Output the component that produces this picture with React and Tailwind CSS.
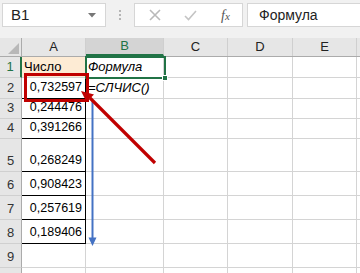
import React from 'react'

const COLS = [
  { key: 'A', w: 'w-[64px]' },
  { key: 'B', w: 'w-[78px]' },
  { key: 'C', w: 'w-[64px]' },
  { key: 'D', w: 'w-[65px]' },
  { key: 'E', w: 'w-[64px]' },
  { key: 'F', w: 'w-[20px]', hidden: true },
]

const ROWS = [
  { n: 1, h: 'h-[21px]', a: 'Число', b: 'Формула' },
  { n: 2, h: 'h-[21px]', a: '0,732597', b: '=СЛЧИС()' },
  { n: 3, h: 'h-[20px]', a: '0,244476' },
  { n: 4, h: 'h-[20px]', a: '0,391266' },
  { n: 5, h: 'h-[33px]', a: '0,268249' },
  { n: 6, h: 'h-[24px]', a: '0,908423' },
  { n: 7, h: 'h-[24px]', a: '0,257619' },
  { n: 8, h: 'h-[24px]', a: '0,189406' },
  { n: 9, h: 'h-[24px]' },
  { n: 10, h: 'h-[24px]', noLabel: true },
]

function Toolbar() {
  return (
    <div className="h-[38px] bg-[#f1f1f1] flex items-start pt-[3px] pl-[2px]">
      {/* name box */}
      <div className="w-[104px] h-[24px] bg-white border border-[#d6d6d6] flex items-center pl-[8px] pr-[9px]">
        <span className="text-[15px] text-[#222] flex-1">B1</span>
        <svg width="8" height="5" viewBox="0 0 8 5"><path d="M0 0h8L4 4.5z" fill="#777" /></svg>
      </div>
      <div className="w-[28px] h-[24px] flex flex-col items-center justify-center gap-[2px]">
        <span className="w-[2px] h-[2px] bg-[#b5b5b5]" />
        <span className="w-[2px] h-[2px] bg-[#b5b5b5]" />
        <span className="w-[2px] h-[2px] bg-[#b5b5b5]" />
      </div>
      {/* cancel / enter / fx */}
      <div className="w-[109px] h-[24px] bg-white border border-[#d6d6d6] flex items-center">
        <svg className="ml-[14px]" width="12" height="12" viewBox="0 0 12 12">
          <path d="M1 1L11 11M11 1L1 11" stroke="#b9b9b9" strokeWidth="1.6" />
        </svg>
        <svg className="ml-[23px]" width="13" height="11" viewBox="0 0 13 11">
          <path d="M1 6L4.5 9.5L12 1" stroke="#c4c4c4" strokeWidth="1.6" fill="none" />
        </svg>
        <span className="ml-[24px] text-[14px] italic text-[#555]" style={{ fontFamily: '"Liberation Serif", serif' }}>f<span className="text-[11px]">x</span></span>
      </div>
      <div className="ml-[4px] flex-1 h-[24px] bg-white border border-[#d6d6d6] border-r-0 flex items-center pl-[11px]">
        <span className="text-[14px] text-[#222]">Формула</span>
      </div>
    </div>
  )
}

function HeaderRow() {
  return (
    <div className="flex h-[19px] bg-[#e6e6e6] border-b border-[#ababab]">
      <div className="w-[22px] h-full border-r border-[#ababab] relative shrink-0">
        <svg className="absolute right-[2px] bottom-[2px]" width="11" height="11" viewBox="0 0 11 11">
          <path d="M11 0V11H0z" fill="#b8b8b8" />
        </svg>
      </div>
      {COLS.map((c) => (
        <div
          key={c.key}
          className={`${c.w} shrink-0 h-full flex items-center justify-center text-[13px] border-r border-[#cfcfcf] ${
            c.key === 'B' ? 'bg-[#d4d4d4] text-[#217346] border-b-2 border-b-[#217346]' : 'text-[#222]'
          }`}
        >
          {c.hidden ? null : c.key}
        </div>
      ))}
    </div>
  )
}

function Row({ r }) {
  const boxed = r.n >= 2 && r.n <= 8
  return (
    <div className={`flex ${r.h}`}>
      <div
        className={`w-[22px] shrink-0 h-full bg-[#e6e6e6] border-b border-[#d0d0d0] flex items-end justify-center pb-[1px] text-[13px] ${
          r.n === 1 ? 'text-[#217346] border-r-2 border-r-[#217346] bg-[#dadada]' : 'text-[#333] border-r border-r-[#ababab]'
        }`}
      >
        {r.noLabel ? null : r.n}
      </div>
      {COLS.map((c) => {
        let cls = 'border-r border-b border-[#d4d4d4] text-[13px]'
        let content = null
        if (c.key === 'A') {
          if (r.n === 1) {
            cls += ' bg-[#fdebd4] justify-start pl-[2px]'
            content = r.a
          } else if (boxed) {
            cls = 'border-r border-b border-black justify-end pr-[3px] text-[12.5px]'
            content = r.a
          }
        }
        if (c.key === 'B' && r.b) {
          cls += ' justify-start pl-[2px] italic overflow-visible whitespace-nowrap'
          content = r.b
        }
        return (
          <div key={c.key} className={`${c.w} shrink-0 h-full flex items-end pb-[1px] text-black ${cls}`}>
            {content}
          </div>
        )
      })}
    </div>
  )
}

export default function App() {
  return (
    <div className="w-[360px] h-[273px] overflow-hidden bg-white" style={{ fontFamily: '"Liberation Sans", Arial, sans-serif' }}>
      <Toolbar />
      <div className="relative">
        <HeaderRow />
        {ROWS.map((r) => (
          <Row key={r.n} r={r} />
        ))}

        {/* overlays: selection, annotation arrows */}
        <div className="absolute left-[85px] top-[18px] w-[81px] h-[23px] border-2 border-[#217346]" />
        <div className="absolute left-[162px] top-[37px] w-[6px] h-[6px] bg-[#217346] border border-white" />
        <div className="absolute left-[24px] top-[35px] w-[65px] h-[29px] border-[3px] border-[#c00000]" />
        <svg className="absolute left-0 top-0" width="360" height="235" viewBox="0 0 360 235">
          {/* blue arrow */}
          <path d="M92.5 63V200" stroke="#4472c4" strokeWidth="2" />
          <path d="M88.5 199.5H96.5L92.5 208z" fill="#4472c4" />
          {/* red arrow */}
          <path d="M155 125L90 60" stroke="#c00000" strokeWidth="3.2" />
          <path d="M81 53L94 56.5L86.5 64z" fill="#c00000" />
        </svg>
      </div>
    </div>
  )
}
